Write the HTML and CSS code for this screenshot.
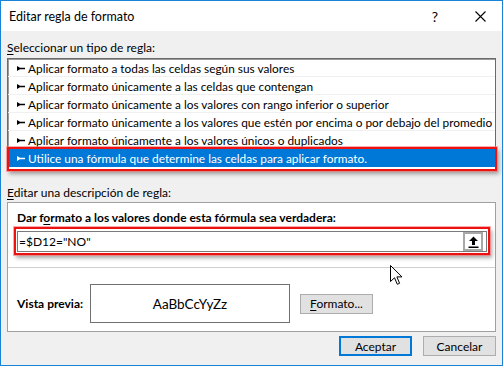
FILE: index.html
```html
<!doctype html>
<html><head><meta charset="UTF-8"><link rel="stylesheet" href="styles.css"></head>
<body>
  <div class="win">
    <div class="titlebar">
      <span class="title">Editar regla de formato</span>
      <span class="help">?</span>
      <svg class="close" width="11" height="11" viewBox="0 0 11 11"><path d="M0.5 0.5 L10.5 10.5 M10.5 0.5 L0.5 10.5" stroke="#000" stroke-width="1.1" fill="none"/></svg>
    </div>
    <div class="content">
      <div class="lbl"><u>S</u>eleccionar un tipo de regla:</div>
      <div class="listwrap">
        <ul class="list">
          <li><svg class="bul" width="8" height="7" viewBox="0 0 8 7"><path d="M0 1 L0 6 L3 4.2 L8 4.2 L8 2.8 L3 2.8 Z" fill="currentColor"/></svg>Aplicar formato a todas las celdas según sus valores</li>
          <li><svg class="bul" width="8" height="7" viewBox="0 0 8 7"><path d="M0 1 L0 6 L3 4.2 L8 4.2 L8 2.8 L3 2.8 Z" fill="currentColor"/></svg>Aplicar formato únicamente a las celdas que contengan</li>
          <li><svg class="bul" width="8" height="7" viewBox="0 0 8 7"><path d="M0 1 L0 6 L3 4.2 L8 4.2 L8 2.8 L3 2.8 Z" fill="currentColor"/></svg>Aplicar formato únicamente a los valores con rango inferior o superior</li>
          <li><svg class="bul" width="8" height="7" viewBox="0 0 8 7"><path d="M0 1 L0 6 L3 4.2 L8 4.2 L8 2.8 L3 2.8 Z" fill="currentColor"/></svg>Aplicar formato únicamente a los valores que estén por encima o por debajo del promedio</li>
          <li><svg class="bul" width="8" height="7" viewBox="0 0 8 7"><path d="M0 1 L0 6 L3 4.2 L8 4.2 L8 2.8 L3 2.8 Z" fill="currentColor"/></svg>Aplicar formato únicamente a los valores únicos o duplicados</li>
          <li class="sel"><svg class="bul" width="8" height="7" viewBox="0 0 8 7"><path d="M0 1 L0 6 L3 4.2 L8 4.2 L8 2.8 L3 2.8 Z" fill="currentColor"/></svg>Utilice una fórmula que determine las celdas para aplicar formato.</li>
        </ul>
        <div class="mark mark-row"></div>
      </div>
      <div class="lbl lbl2"><u>E</u>ditar una descripción de regla:</div>
      <div class="group">
        <div class="bold">Dar f<u>o</u>rmato a los valores donde esta fórmula sea verdadera:</div>
        <div class="formulawrap">
          <div class="formula">
            <span class="ftext">=$D12="NO"</span>
            <span class="pick"><svg width="11" height="12" viewBox="0 0 11 12"><path d="M5.5 0.5 L10 5 L7 5 L7 9 L4 9 L4 5 L1 5 Z" fill="#000"/><rect x="0.5" y="10.5" width="10" height="1.5" fill="#000"/></svg></span>
          </div>
          <div class="mark mark-formula"></div>
        </div>
        <div class="sep"></div>
        <div class="previewrow">
          <span class="bold">Vista previa:</span>
          <div class="preview">AaBbCcYyZz</div>
          <button class="btn"><u>F</u>ormato...</button>
        </div>
      </div>
      <div class="actions">
        <button class="btn btn-default">Aceptar</button>
        <button class="btn">Cancelar</button>
      </div>
    </div>
    <svg class="cursor" width="13" height="21" viewBox="0 0 13 21"><path d="M0.5 0.5 L0.5 16.5 L4.5 12.8 L7.3 19.3 L9.6 18.3 L6.9 11.9 L12 11.9 Z" fill="#fff" stroke="#000" stroke-width="1" stroke-linejoin="round"/></svg>
  </div>
</body></html>
```

FILE: styles.css
```css
* {box-sizing: border-box;}
body {margin:0;font-family:Lato,"Noto Sans",sans-serif;font-size:12px;color:#000;}
u {text-decoration-thickness:1px;text-underline-offset:2px;}
.win {position:relative;width:503px;height:366px;border:1px solid #1883d7;background:#f0f0f0;display:flex;flex-direction:column;}
.titlebar {height:30px;background:#fff;display:flex;align-items:center;padding-left:8px;}
.title {font-size:12.5px;}
.help {margin-left:auto;margin-right:37px;font-size:14px;}
.close {margin-right:16px;}
.content {padding:9px 6px 0 6px;}
.lbl {line-height:16px;height:16px;}
.lbl2 {margin-top:15px;}
.listwrap {position:relative;margin-top:2px;}
.list {list-style:none;margin:0;padding:0 0 2px 0;background:#fff;border:1px solid #6a6a6a;box-shadow:inset 1px 1px 0 #9a9a9a;font-size:11.85px;}
.list li {height:18px;display:flex;align-items:center;padding:1px 0 0 9px;border-bottom:1px solid #f0f0f0;white-space:nowrap;}
.list li.sel {background:#0078d7;color:#fff;border-bottom-color:#0078d7;}
.bul {margin-right:3px;flex:none;}
.mark {position:absolute;border:2px solid #ee1111;box-shadow:0 0 0 1px rgba(255,120,120,.6),2px 3px 4px rgba(0,0,0,.35);}
.mark-row {left:0;top:89px;width:490px;height:24px;}
.group {margin-top:1px;background:#fff;border:1px solid #a0a0a0;padding:7px 7px 6px 9px;height:130px;}
.bold {font-weight:bold;line-height:16px;}
.formulawrap {position:relative;margin-top:5px;width:470px;}
.formula {height:21px;border:1px solid #7a7a7a;display:flex;align-items:center;padding:0 3px 0 1px;}
.ftext {flex:1;}
.pick {width:20px;height:19px;border:2px solid #a8a8a8;background:#fff;display:flex;align-items:center;justify-content:center;}
.mark-formula {left:-3px;top:-4px;right:-3px;bottom:-3px;}
.sep {margin:15px -7px 0 -9px;border-top:1px solid #cfcfcf;}
.previewrow {display:flex;align-items:center;margin-top:16px;}
.previewrow .bold {width:73px;}
.preview {width:200px;height:39px;border:1px solid #707070;display:flex;align-items:center;justify-content:center;font-size:13.5px;}
.btn {font-family:inherit;font-size:12px;width:73px;height:20px;padding:0;background:#e1e1e1;border:1px solid #adadad;color:#000;}
.previewrow .btn {margin-left:10px;}
.actions {display:flex;justify-content:flex-end;gap:11px;margin-top:4px;padding-right:0;}
.btn-default {border:2px solid #0078d7;}
.cursor {position:absolute;left:389px;top:264px;}
```
